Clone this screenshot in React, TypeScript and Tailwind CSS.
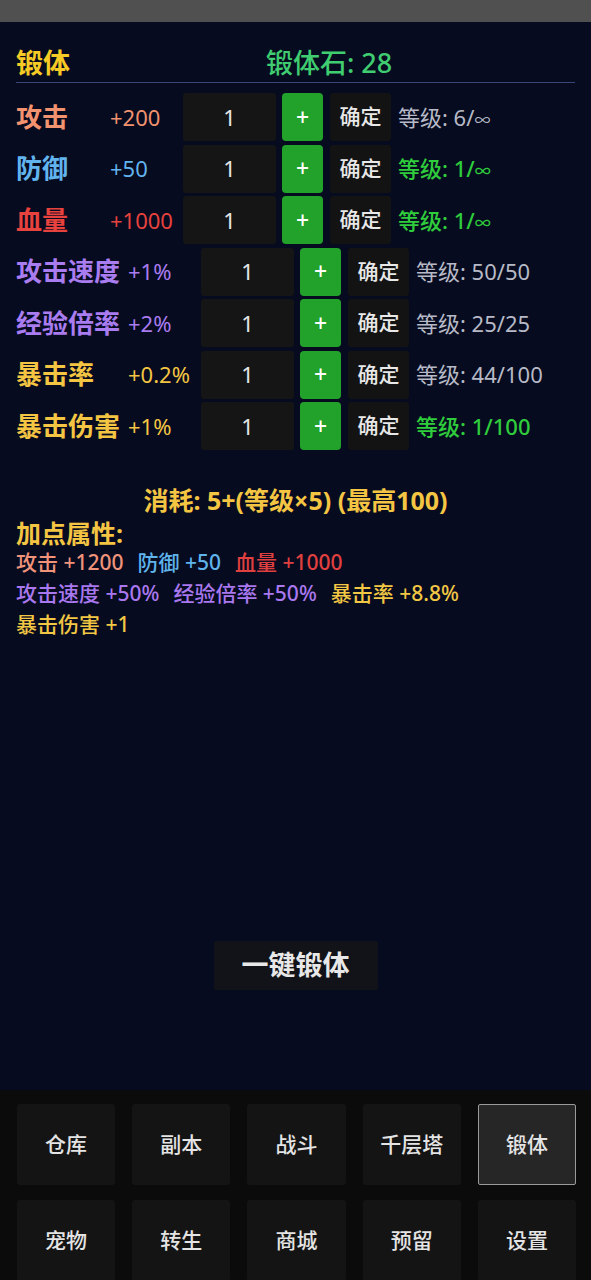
import React from "react";

type Row = {
  name: string;
  value: string;
  color: string;
  level: string;
  levelGreen?: boolean;
  wide?: boolean;
};

const rows: Row[] = [
  { name: "攻击", value: "+200", color: "text-[#f2926e]", level: "等级: 6/∞" },
  { name: "防御", value: "+50", color: "text-[#62b4ee]", level: "等级: 1/∞", levelGreen: true },
  { name: "血量", value: "+1000", color: "text-[#e8423e]", level: "等级: 1/∞", levelGreen: true },
  { name: "攻击速度", value: "+1%", color: "text-[#a97cf0]", level: "等级: 50/50", wide: true },
  { name: "经验倍率", value: "+2%", color: "text-[#a97cf0]", level: "等级: 25/25", wide: true },
  { name: "暴击率", value: "+0.2%", color: "text-[#f4c543]", level: "等级: 44/100", wide: true },
  { name: "暴击伤害", value: "+1%", color: "text-[#f4c543]", level: "等级: 1/100", levelGreen: true, wide: true },
];

const attrLines = [
  [
    { t: "攻击 +1200", c: "text-[#f0937a]" },
    { t: "防御 +50", c: "text-[#5fb4ec]" },
    { t: "血量 +1000", c: "text-[#e0403f]" },
  ],
  [
    { t: "攻击速度 +50%", c: "text-[#a978ef]" },
    { t: "经验倍率 +50%", c: "text-[#a978ef]" },
    { t: "暴击率 +8.8%", c: "text-[#f2c744]" },
  ],
  [{ t: "暴击伤害 +1", c: "text-[#f2c744]" }],
];

const navItems = ["仓库", "副本", "战斗", "千层塔", "锻体", "宠物", "转生", "商城", "预留", "设置"];

// ∞ 在参考图里比较小
const Level = ({ text }: { text: string }) => {
  if (!text.endsWith("∞")) return <>{text}</>;
  return (
    <>
      {text.slice(0, -1)}
      <span className="text-[16px]">∞</span>
    </>
  );
};

const StatRow = ({ row }: { row: Row }) => (
  <div className="flex items-center h-[48px]">
    <span className={`${row.wide ? "w-[112px]" : "w-[94px]"} shrink-0 text-[26px] font-bold ${row.color}`}>
      {row.name}
    </span>
    <span className={`w-[73px] shrink-0 text-[22px] ${row.color}`}>{row.value}</span>
    <div className="w-[93px] h-[48px] shrink-0 bg-[#151515] rounded-[3px] flex items-center justify-center text-[22px] text-[#e6e6e6]">
      1
    </div>
    <button className="ml-[6px] w-[41px] h-[48px] shrink-0 bg-[#22a22b] rounded-[4px] flex items-center justify-center text-[23px] font-medium text-white">
      +
    </button>
    <button className="ml-[7px] w-[61px] h-[48px] shrink-0 bg-[#131313] rounded-[3px] flex items-center justify-center text-[21px] font-medium text-[#e8e8e8]">
      确定
    </button>
    <span
      className={`ml-[7px] text-[22px] whitespace-nowrap ${
        row.levelGreen ? "text-[#2fcc3c] font-medium" : "text-[#b7bac6]"
      }`}
    >
      <Level text={row.level} />
    </span>
  </div>
);

export default function App() {
  return (
    <div
      className="w-[591px] h-[1280px] overflow-hidden flex flex-col bg-[#060b1f]"
      style={{ fontFamily: '"Noto Sans", "Noto Sans CJK SC", sans-serif' }}
    >
      <div className="h-[22px] shrink-0 bg-[#505050]" />

      <main className="flex-1 min-h-0 flex flex-col px-[16px]">
        {/* 标题 */}
        <div className="flex items-end pt-[24px] pb-[2px] border-b border-[#3b4677]">
          <span className="w-[250px] text-[27px] leading-[34px] font-bold text-[#f6cb26]">锻体</span>
          <span className="text-[27px] leading-[34px] font-medium text-[#40cc70]">锻体石: 28</span>
        </div>

        {/* 属性行 */}
        <div className="flex flex-col gap-[3.5px] pt-[10px]">
          {rows.map((r) => (
            <StatRow key={r.name} row={r} />
          ))}
        </div>

        <p className="mt-[34px] text-center text-[25px] leading-[32px] font-bold text-[#f4c543]">
          消耗: 5+(等级×5) (最高100)
        </p>
        <p className="mt-[3px] text-[25px] leading-[28px] font-bold text-[#f4c543]">加点属性:</p>
        <div className="flex flex-col">
          {attrLines.map((line, i) => (
            <div key={i} className="flex gap-x-[14px] text-[21px] leading-[31px] font-medium">
              {line.map((a) => (
                <span key={a.t} className={a.c}>
                  {a.t}
                </span>
              ))}
            </div>
          ))}
        </div>

        <button className="mt-auto mb-[100px] self-center w-[164px] h-[49px] bg-[#121318] rounded-[2px] text-[27px] font-bold text-[#e8e8e8]">
          一键锻体
        </button>
      </main>

      {/* 底部导航 */}
      <nav className="h-[190px] shrink-0 overflow-hidden bg-[#0b0b0b] pt-[14px] pl-[17px] pr-[15px]">
        <div className="grid grid-cols-5 gap-x-[17px] gap-y-[15px]">
          {navItems.map((n) => (
            <button
              key={n}
              className={`h-[81px] flex items-center justify-center text-[21px] font-medium text-[#e4e4e4] ${
                n === "锻体"
                  ? "bg-[#262626] border border-[#9a9a9a] rounded-[2px]"
                  : "bg-[#141414] rounded-[3px]"
              }`}
            >
              {n}
            </button>
          ))}
        </div>
      </nav>
    </div>
  );
}
